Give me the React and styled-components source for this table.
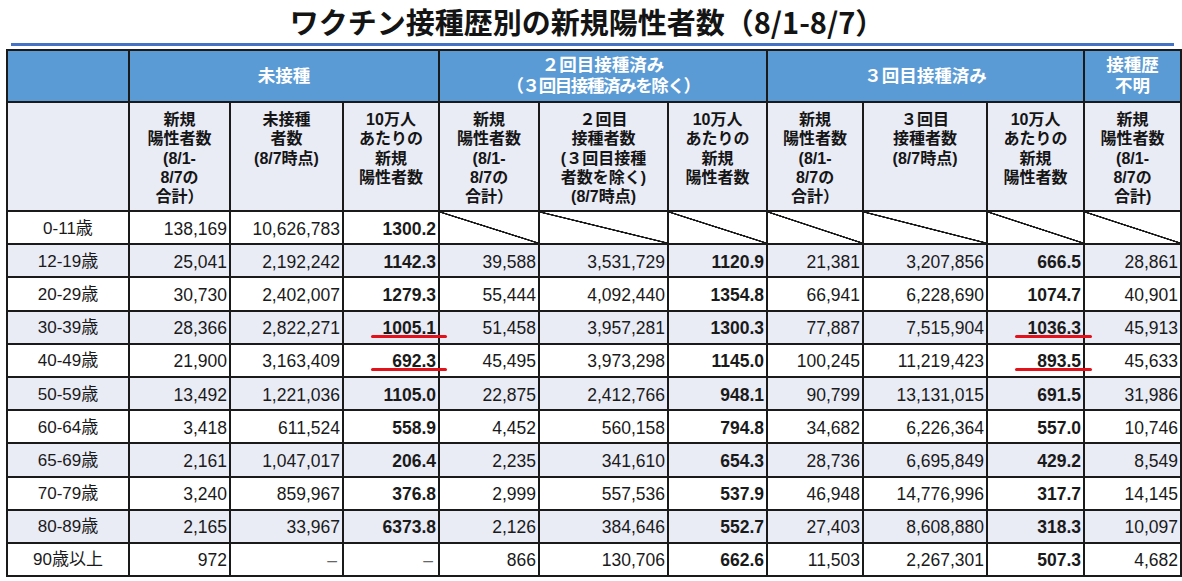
import React from "react";
import styled, { createGlobalStyle } from "styled-components";

const Global = createGlobalStyle`
  html, body { margin: 0; padding: 0; background: #ffffff; }
  body { overflow: hidden; }
`;

const Page = styled.div`
  width: 1182px;
  height: 581px;
  overflow: hidden;
  background: #fff;
  font-family: "Liberation Sans", "Noto Sans CJK JP", sans-serif;
  color: #111;
`;

const Title = styled.h1`
  margin: 0;
  height: 42px;
  line-height: 42px;
  padding-right: 8px;
  text-align: center;
  font-family: "Noto Sans CJK JP", sans-serif;
  font-weight: 700;
  font-size: 29px;
  color: #141414;
`;

const Rule = styled.div`
  margin: 1px 8px 0 11px;
  height: 3px;
  background: #4472c4;
`;

const Table = styled.table`
  border-collapse: collapse;
  table-layout: fixed;
  margin: 3px 0 0 6px;
  width: 1174px;
  font-family: "Liberation Sans", "Noto Sans CJK JP", sans-serif;
`;

const Cell = styled.td`
  border: 2px solid #1a1a1a;
  padding: 0;
  position: relative;
  font-family: "Liberation Sans", "Noto Sans CJK JP", sans-serif;
`;

const GroupHead = styled(Cell).attrs({ as: "th" })`
  height: 50px;
  background: #5b9bd5;
  color: #fff;
  font-weight: 700;
  font-size: 17.5px;
  line-height: 21px;
  text-align: center;
  vertical-align: middle;
`;

const Tight = styled.span`
  letter-spacing: -1.4px;
`;

const SubHead = styled(Cell).attrs({ as: "th" })`
  height: 100px;
  background: #e9ebf5;
  color: #151515;
  font-weight: 700;
  font-size: 16px;
  line-height: 19.3px;
  text-align: center;
  vertical-align: top;
  padding-top: 7px;
`;

const Row = styled.tr`
  height: 33.2px;
  background: ${(p) => (p.$alt ? "#e9ebf5" : "#ffffff")};
`;

const AgeCell = styled(Cell)`
  text-align: center;
  font-size: 17px;
  line-height: 20px;
  padding-top: 2px;
  color: #1a1a1a;
`;

const NumCell = styled(Cell)`
  text-align: right;
  padding: 2px ${(p) => (p.$dash ? "5px" : "2px")} 0 0;
  font-size: 17.5px;
  line-height: 20px;
  font-weight: ${(p) => (p.$bold ? 700 : 400)};
  color: ${(p) => (p.$dash ? "#666" : "#1a1a1a")};
  white-space: nowrap;
`;

const DiagCell = styled(Cell)`
  background: linear-gradient(
    to top right,
    transparent calc(50% - 1px),
    #1a1a1a calc(50% - 0.6px),
    #1a1a1a calc(50% + 0.6px),
    transparent calc(50% + 1px)
  );
`;

const Underline = styled.span`
  position: absolute;
  left: 27px;
  right: -9px;
  bottom: 5px;
  height: 3px;
  border-radius: 2px;
  background: #e3121a;
  z-index: 2;
`;

const DASH = "–";

const widths = [122, 101, 113, 96, 100, 129, 99, 96, 124, 97, 97];

const subHeads = [
  ["新規", "陽性者数", "(8/1-", "8/7の", "合計）"],
  ["未接種", "者数", "(8/7時点)"],
  ["10万人", "あたりの", "新規", "陽性者数"],
  ["新規", "陽性者数", "(8/1-", "8/7の", "合計）"],
  ["２回目", "接種者数", "(３回目接種", "者数を除く)", "(8/7時点)"],
  ["10万人", "あたりの", "新規", "陽性者数"],
  ["新規", "陽性者数", "(8/1-", "8/7の", "合計）"],
  ["３回目", "接種者数", "(8/7時点)"],
  ["10万人", "あたりの", "新規", "陽性者数"],
  ["新規", "陽性者数", "(8/1-", "8/7の", "合計)"],
];

const rows = [
  ["0-11歳", "138,169", "10,626,783", "1300.2", null, null, null, null, null, null, null],
  ["12-19歳", "25,041", "2,192,242", "1142.3", "39,588", "3,531,729", "1120.9", "21,381", "3,207,856", "666.5", "28,861"],
  ["20-29歳", "30,730", "2,402,007", "1279.3", "55,444", "4,092,440", "1354.8", "66,941", "6,228,690", "1074.7", "40,901"],
  ["30-39歳", "28,366", "2,822,271", "1005.1", "51,458", "3,957,281", "1300.3", "77,887", "7,515,904", "1036.3", "45,913"],
  ["40-49歳", "21,900", "3,163,409", "692.3", "45,495", "3,973,298", "1145.0", "100,245", "11,219,423", "893.5", "45,633"],
  ["50-59歳", "13,492", "1,221,036", "1105.0", "22,875", "2,412,766", "948.1", "90,799", "13,131,015", "691.5", "31,986"],
  ["60-64歳", "3,418", "611,524", "558.9", "4,452", "560,158", "794.8", "34,682", "6,226,364", "557.0", "10,746"],
  ["65-69歳", "2,161", "1,047,017", "206.4", "2,235", "341,610", "654.3", "28,736", "6,695,849", "429.2", "8,549"],
  ["70-79歳", "3,240", "859,967", "376.8", "2,999", "557,536", "537.9", "46,948", "14,776,996", "317.7", "14,145"],
  ["80-89歳", "2,165", "33,967", "6373.8", "2,126", "384,646", "552.7", "27,403", "8,608,880", "318.3", "10,097"],
  ["90歳以上", "972", DASH, DASH, "866", "130,706", "662.6", "11,503", "2,267,301", "507.3", "4,682"],
];

const underlined = new Set(["3-3", "4-3", "3-9", "4-9"]);
const boldCols = new Set([3, 6, 9]);

function Lines({ items }) {
  return items.map((t, i) => (
    <React.Fragment key={i}>
      {i > 0 && <br />}
      {t}
    </React.Fragment>
  ));
}

export default function App() {
  return (
    <Page>
      <Global />
      <Title>ワクチン接種歴別の新規陽性者数（8/1-8/7）</Title>
      <Rule />
      <Table>
        <colgroup>
          {widths.map((w, i) => (
            <col key={i} style={{ width: w }} />
          ))}
        </colgroup>
        <thead>
          <tr>
            <GroupHead />
            <GroupHead colSpan={3}>未接種</GroupHead>
            <GroupHead colSpan={3}>
              ２回目接種済み
              <br />
              <Tight>（３回目接種済みを除く）</Tight>
            </GroupHead>
            <GroupHead colSpan={3}>３回目接種済み</GroupHead>
            <GroupHead>
              接種歴
              <br />
              不明
            </GroupHead>
          </tr>
          <tr>
            <SubHead />
            {subHeads.map((h, i) => (
              <SubHead key={i}>
                <Lines items={h} />
              </SubHead>
            ))}
          </tr>
        </thead>
        <tbody>
          {rows.map((r, ri) => (
            <Row key={ri} $alt={ri % 2 === 1}>
              <AgeCell>{r[0]}</AgeCell>
              {r.slice(1).map((v, ci) => {
                const col = ci + 1;
                if (v === null) return <DiagCell key={col} />;
                const dash = v === DASH;
                return (
                  <NumCell
                    key={col}
                    $bold={boldCols.has(col) && !dash}
                    $dash={dash}
                  >
                    {v}
                    {underlined.has(`${ri}-${col}`) && <Underline />}
                  </NumCell>
                );
              })}
            </Row>
          ))}
        </tbody>
      </Table>
    </Page>
  );
}
